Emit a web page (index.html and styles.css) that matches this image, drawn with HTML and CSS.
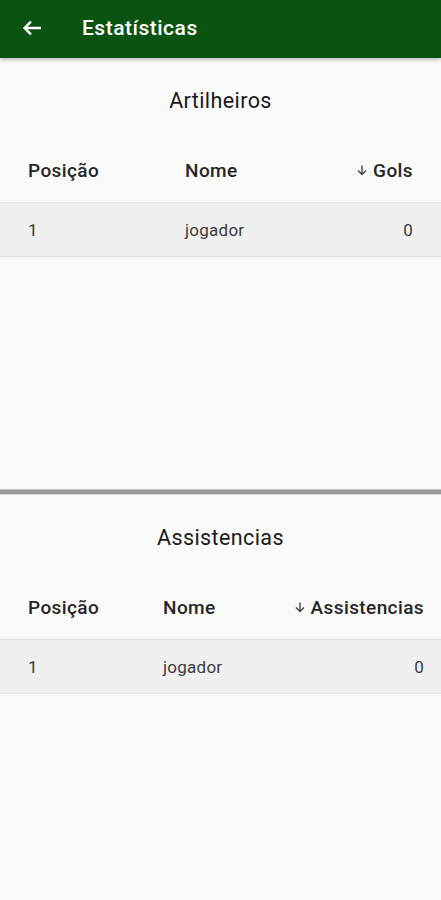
FILE: index.html
```html
<!DOCTYPE html>
<html lang="pt">
<head>
<meta charset="utf-8">
<title>Estatísticas</title>
<link rel="stylesheet" href="styles.css">
</head>
<body>
<header class="appbar">
  <svg class="back" width="20" height="16" viewBox="0 0 20 16"><path d="M2.5 8H19M9 1.6L2.5 8L9 14.4" stroke="#fff" stroke-width="2.3" fill="none"/></svg>
  <h1 class="appbar-title">Estatísticas</h1>
</header>
<main class="content">
  <section class="stats stats-first">
    <h2 class="stats-title">Artilheiros</h2>
    <div class="table table-gols">
      <div class="row head">
        <span class="cell">Posição</span>
        <span class="cell">Nome</span>
        <span class="cell num"><svg class="sort" width="10" height="11" viewBox="0 0 10 11"><path d="M5 0.5v9M1 5.5l4 4 4-4" stroke="#444" stroke-width="1.4" fill="none"/></svg>Gols</span>
      </div>
      <div class="row data">
        <span class="cell">1</span>
        <span class="cell">jogador</span>
        <span class="cell num">0</span>
      </div>
    </div>
  </section>
  <div class="divider"></div>
  <section class="stats">
    <h2 class="stats-title">Assistencias</h2>
    <div class="table table-assist">
      <div class="row head">
        <span class="cell">Posição</span>
        <span class="cell">Nome</span>
        <span class="cell num"><svg class="sort" width="10" height="11" viewBox="0 0 10 11"><path d="M5 0.5v9M1 5.5l4 4 4-4" stroke="#444" stroke-width="1.4" fill="none"/></svg>Assistencias</span>
      </div>
      <div class="row data">
        <span class="cell">1</span>
        <span class="cell">jogador</span>
        <span class="cell num">0</span>
      </div>
    </div>
  </section>
</main>
</body>
</html>
```
FILE: styles.css
```css
* { box-sizing: border-box; }
html, body { margin: 0; padding: 0; }
body {
  width: 441px;
  height: 900px;
  overflow: hidden;
  background: #fafafa;
  font-family: Roboto, "Liberation Sans", sans-serif;
  color: #212121;
}
.appbar {
  height: 58px;
  background: #0b5311;
  display: flex;
  align-items: center;
  padding-left: 22px;
  padding-bottom: 3px;
  box-shadow: 0 2px 4px rgba(0,0,0,0.25);
  position: relative;
  z-index: 1;
}
.back { display: block; margin-top: 1px; }
.appbar-title {
  margin: 0 0 0 40px;
  font-size: 21px;
  font-weight: 500;
  color: #fff;
  letter-spacing: 0.5px;
}
.stats-first { height: 431px; }
.stats-title {
  margin: 0;
  height: 80px;
  padding-top: 5px;
  display: flex;
  align-items: center;
  justify-content: center;
  font-size: 21.5px;
  font-weight: 400;
  letter-spacing: 0.4px;
  color: #1a1a1a;
}
.table-gols .row { grid-template-columns: 157px 1fr auto; padding: 0 28px 0 28px; }
.table-assist .row { grid-template-columns: 135px 1fr auto; padding: 0 17px 0 28px; }
.row {
  display: grid;
  align-items: center;
  border-bottom: 1px solid #e0e0e0;
}
.row.head {
  height: 65px;
  font-size: 19px;
  font-weight: 500;
  letter-spacing: 0.4px;
  color: #262626;
}
.row.data {
  height: 54px;
  background: #f0f0f0;
  font-size: 17px;
  font-weight: 400;
  letter-spacing: 0.25px;
  color: #3c3c3c;
}
.num {
  display: flex;
  align-items: center;
  justify-content: flex-end;
}
.sort { margin-right: 6px; margin-top: 1px; }
.divider {
  height: 6px;
  background: #9a9a9a;
  border-top: 1px solid #c4c4c4;
  border-bottom: 1px solid #dcdcdc;
}
```
